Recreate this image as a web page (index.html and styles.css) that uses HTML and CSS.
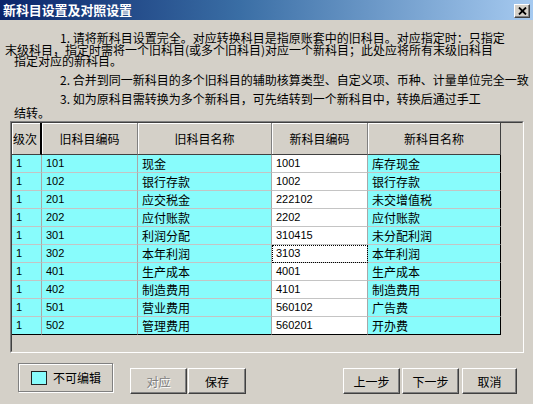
FILE: index.html
```html
<!DOCTYPE html>
<html lang="zh-CN">
<head>
<meta charset="utf-8">
<title>新科目设置及对照设置</title>
<link rel="stylesheet" href="styles.css">
</head>
<body>
<div class="window">
  <div class="titlebar">
    <span class="title">新科目设置及对照设置</span>
    <span class="close">
      <svg width="9" height="8" viewBox="0 0 9 8"><path d="M1 0.5 L8 7.5 M8 0.5 L1 7.5" stroke="#000" stroke-width="1.8"/></svg>
    </span>
  </div>

  <div class="notes">
    <p class="note n1">
      <span class="ln first">1. 请将新科目设置完全。对应转换科目是指原账套中的旧科目。对应指定时：只指定</span>
      <span class="ln wide">末级科目，指定时需将一个旧科目(或多个旧科目)对应一个新科目；此处应将所有末级旧科目</span>
      <span class="ln">指定对应的新科目。</span>
    </p>
    <p class="note n2">
      <span class="ln first">2. 合并到同一新科目的多个旧科目的辅助核算类型、自定义项、币种、计量单位完全一致</span>
    </p>
    <p class="note n3">
      <span class="ln first">3. 如为原科目需转换为多个新科目，可先结转到一个新科目中，转换后通过手工</span>
      <span class="ln">结转。</span>
    </p>
  </div>

  <div class="frame">
    <div class="frame-in">
      <div class="grid">
        <div class="th th-lvl">级次</div>
        <div class="th">旧科目编码</div>
        <div class="th">旧科目名称</div>
        <div class="th">新科目编码</div>
        <div class="th th-last">新科目名称</div>

        <div class="td num">1</div><div class="td num">101</div><div class="td">现金</div><div class="td num edit">1001</div><div class="td last">库存现金</div>
        <div class="td num">1</div><div class="td num">102</div><div class="td">银行存款</div><div class="td num edit">1002</div><div class="td last">银行存款</div>
        <div class="td num">1</div><div class="td num">201</div><div class="td">应交税金</div><div class="td num edit">222102</div><div class="td last">未交增值税</div>
        <div class="td num">1</div><div class="td num">202</div><div class="td">应付账款</div><div class="td num edit">2202</div><div class="td last">应付账款</div>
        <div class="td num">1</div><div class="td num">301</div><div class="td">利润分配</div><div class="td num edit">310415</div><div class="td last">未分配利润</div>
        <div class="td num">1</div><div class="td num">302</div><div class="td">本年利润</div><div class="td num edit focus">3103</div><div class="td last">本年利润</div>
        <div class="td num">1</div><div class="td num">401</div><div class="td">生产成本</div><div class="td num edit">4001</div><div class="td last">生产成本</div>
        <div class="td num">1</div><div class="td num">402</div><div class="td">制造费用</div><div class="td num edit">4101</div><div class="td last">制造费用</div>
        <div class="td num">1</div><div class="td num">501</div><div class="td">营业费用</div><div class="td num edit">560102</div><div class="td last">广告费</div>
        <div class="td num bot">1</div><div class="td num bot">502</div><div class="td bot">管理费用</div><div class="td num edit bot">560201</div><div class="td last bot">开办费</div>
      </div>
    </div>
  </div>

  <div class="footer">
    <div class="legend"><span class="swatch"></span><span class="legend-text">不可编辑</span></div>
    <button class="btn disabled btn-map">对应</button>
    <button class="btn btn-save">保存</button>
    <div class="spacer"></div>
    <button class="btn btn-prev">上一步</button>
    <button class="btn btn-next">下一步</button>
    <button class="btn btn-cancel">取消</button>
  </div>
</div>
</body>
</html>
```

FILE: styles.css
```css
html, body {
  margin: 0;
  padding: 0;
  background: #d4d0c8;
}
body {
  width: 533px;
  height: 404px;
  overflow: hidden;
  font-family: "Noto Sans CJK SC", "Liberation Sans", sans-serif;
  font-size: 12px;
  color: #000;
}
.window {
  width: 533px;
  height: 404px;
  position: relative;
  overflow: hidden;
}
.titlebar {
  height: 20px;
  background: linear-gradient(to right, #0a246a 0%, #3a6ea5 45%, #a6caf0 100%);
  display: flex;
  align-items: center;
  justify-content: space-between;
}
.title {
  color: #fff;
  font-weight: bold;
  font-size: 13px;
  padding-left: 3px;
  line-height: 20px;
  letter-spacing: -0.1px;
}
.close {
  width: 14px;
  height: 12px;
  margin-right: 3px;
  margin-top: 1px;
  background: #d4d0c8;
  border: 1px solid;
  border-color: #fff #404040 #404040 #fff;
  box-shadow: inset -1px -1px #808080;
  display: flex;
  align-items: center;
  justify-content: center;
}
.close svg { display: block; }

.notes { padding: 0; }
.note {
  margin: 0;
  white-space: nowrap;
}
.ln { display: block; padding-left: 14px; }
.ln.first { padding-left: 60px; }
.ln.wide { padding-left: 5px; }
.n1 { margin-top: 12px; line-height: 11.5px; }
.n2 { margin-top: 6.5px; line-height: 14px; }
.n3 { margin-top: 5px; line-height: 13.5px; }

.frame {
  margin-top: 2px;
  margin-left: 10px;
  width: 514px;
  height: 232px;
  box-sizing: border-box;
  border: 1px solid;
  border-color: #808080 #fff #fff #808080;
}
.frame-in {
  height: 100%;
  box-sizing: border-box;
  border: 1px solid;
  border-color: #404040 #d4d0c8 #d4d0c8 #404040;
}
.grid {
  display: grid;
  grid-template-columns: 30px 96px 134px 96px 133px;
  grid-template-rows: 32px repeat(10, 18px);
  width: 489px;
}
.th {
  box-sizing: border-box;
  background: #d4d0c8;
  border-right: 1px solid #808080;
  border-bottom: 1px solid #404040;
  box-shadow: inset 1px 1px #fff;
  display: flex;
  align-items: center;
  justify-content: center;
  font-size: 12px;
}
.th-lvl { border-right: 2px solid #000; justify-content: flex-start; padding-left: 1px; }
.th-last { border-right: 1px solid #404040; }
.td {
  box-sizing: border-box;
  background: #88fcfc;
  border-right: 1px solid #a8a8a8;
  border-bottom: 1px solid #c4c4c4;
  padding-left: 4px;
  line-height: 17px;
  white-space: nowrap;
  overflow: hidden;
}
.td.num {
  font-family: "Liberation Sans", sans-serif;
  font-size: 11px;
}
.td.edit { background: #fff; }
.td.last { border-right: 1px solid #000; }
.td.bot { border-bottom: 1px solid #000; }
.td.focus {
  outline: 1px dotted #000;
  outline-offset: -1px;
}

.footer {
  display: flex;
  align-items: flex-start;
  padding-left: 18px;
  margin-top: 10px;
}
.legend {
  width: 95px;
  height: 29px;
  box-sizing: border-box;
  border: 1px solid #808080;
  box-shadow: inset 1px 1px #fff, 1px 1px #fff;
  display: flex;
  align-items: center;
  padding-left: 12px;
}
.swatch {
  width: 16px;
  height: 14px;
  box-sizing: border-box;
  background: #88fcfc;
  border: 1px solid #202020;
}
.legend-text { margin-left: 6px; }
.btn {
  margin-top: 5px;
  height: 26px;
  width: 57px;
  box-sizing: border-box;
  background: #d4d0c8;
  border: 1px solid;
  border-color: #fff #404040 #404040 #fff;
  box-shadow: inset -1px -1px #808080;
  font-family: "Noto Sans CJK SC", sans-serif;
  font-size: 12px;
  color: #000;
  padding: 0;
}
.btn.disabled {
  color: #808080;
  text-shadow: 1px 1px #fff;
}
.btn-map { margin-left: 17px; }
.btn-save { margin-left: 1px; width: 58px; }
.spacer { width: 97px; }
.btn-next { margin-left: 2px; }
.btn-cancel { margin-left: 3px; width: 55px; }
```
